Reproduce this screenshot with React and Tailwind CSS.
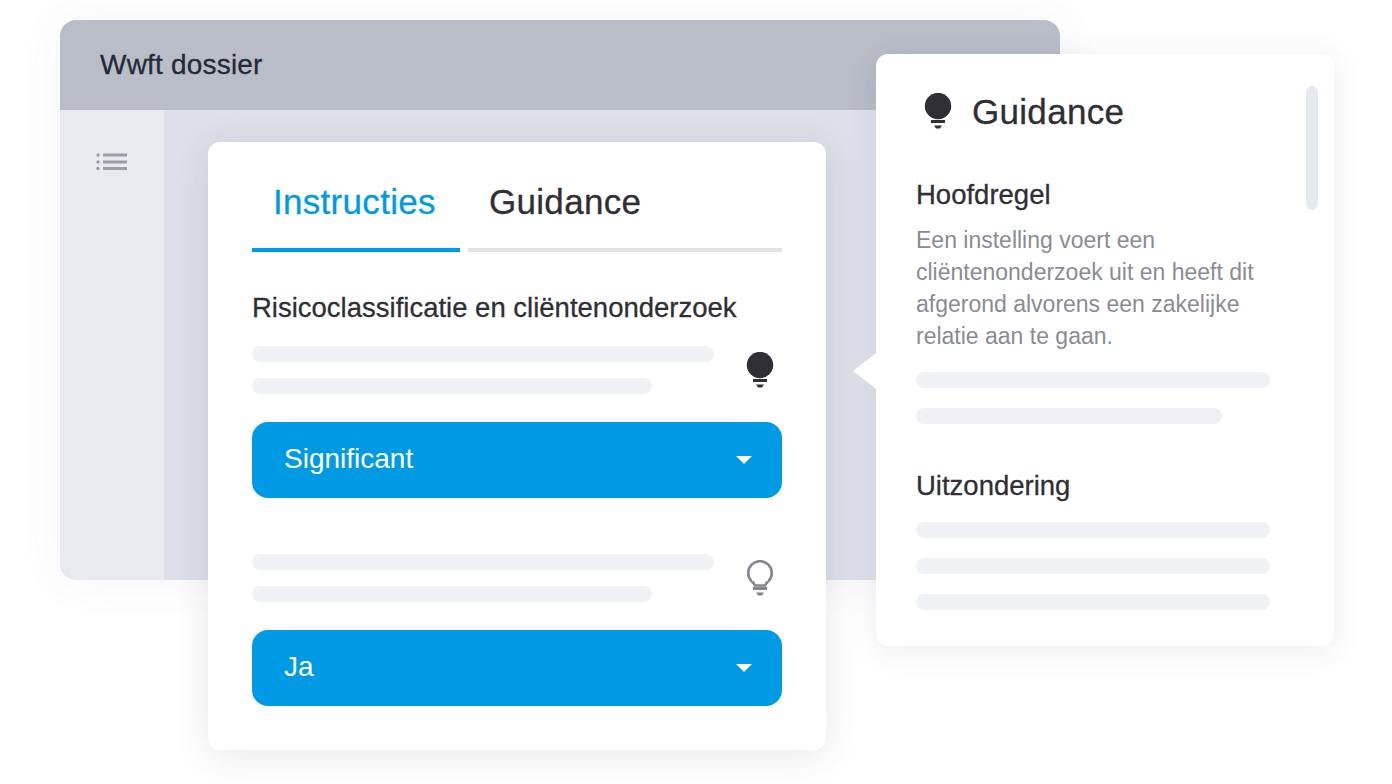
const font = { fontFamily: "'Liberation Sans', Arial, sans-serif" };

// Filled or outlined bulb with the two little base lines
const Bulb = ({ outline = false, className = "" }) => {
  const color = outline ? "#85858d" : "#2f2f35";
  return (
    <svg width="28" height="38" viewBox="0 0 28 38" className={className}>
      <circle
        cx="14"
        cy="13"
        r={outline ? 11.8 : 13.2}
        fill={outline ? "none" : color}
        stroke={outline ? color : "none"}
        strokeWidth="2.6"
      />
      <path d="M6 20h16l-2.500 5h-11z" fill={outline ? "#fff" : color} />
      {outline && <path d="M6.500 21.500 9 25.500h10l2.500-4" fill="none" stroke={color} strokeWidth="2.400" />}
      <rect x="7" y="27" width="14" height="3" fill={color} />
      <path d="M10 32.500h8l-2 3h-4z" fill={color} />
    </svg>
  );
};

const Bar = ({ className = "" }) => (
  <div className={`h-4 rounded-lg bg-[#f0f1f5] ${className}`} />
);

const Question = ({ value, outline }) => (
  <div>
    <div className="flex items-center justify-between">
      <div className="flex flex-col gap-4">
        <Bar className="w-[462px]" />
        <Bar className="w-[400px]" />
      </div>
      <Bulb outline={outline} className="mr-2 mt-[2px]" />
    </div>
    <div className="mt-[28px] flex h-[76px] items-center justify-between rounded-2xl bg-[#009ae4] pl-8 pr-[30px] text-[28px] text-white">
      <span className="-mt-[2px]">{value}</span>
      <span className="h-0 w-0 border-x-[8px] border-t-[8px] border-x-transparent border-t-white" />
    </div>
  </div>
);

const App = () => {
  return (
    <div className="relative h-[784px] w-[1392px] overflow-hidden bg-white" style={font}>
      {/* Dossier window */}
      <div className="absolute left-[60px] top-[20px] flex h-[560px] w-[1000px] flex-col overflow-hidden rounded-2xl shadow-[0_0_40px_rgba(120,90,150,0.08)]">
        <div className="flex h-[90px] items-center bg-[#b9bdc8] pl-10 text-[28px] tracking-[0.2px] text-[#262a38] [-webkit-text-stroke:0.3px_#262a38]">
          Wwft dossier
        </div>
        <div className="flex flex-1">
          <div className="flex w-[104px] justify-center bg-[#e9eaf0] pt-[42px]">
            <svg width="32" height="20" viewBox="0 0 32 20" fill="#9a9dab">
              <circle cx="2" cy="3" r="1.700" />
              <circle cx="2" cy="10" r="1.700" />
              <circle cx="2" cy="16.500" r="1.700" />
              <rect x="7" y="1.500" width="24" height="3" />
              <rect x="7" y="8.500" width="24" height="3" />
              <rect x="7" y="15" width="24" height="3" />
            </svg>
          </div>
          <div className="flex-1 bg-[#dde0e9]" />
        </div>
      </div>

      {/* Instructions card */}
      <div className="absolute left-[208px] top-[142px] h-[608px] w-[618px] rounded-xl bg-white px-11 pt-[34px] shadow-[0_4px_36px_rgba(60,60,60,0.12)]">
        <div className="flex gap-2 text-[35px] tracking-[0.3px]">
          <div className="h-[76px] w-[208px] border-b-4 border-[#009ae4] pl-[21px] text-[#009ae4] [-webkit-text-stroke:0.3px_#009ae4]">
            Instructies
          </div>
          <div className="h-[76px] flex-1 border-b-4 border-[#e2e3e9] pl-[21px] text-[#2f2f35] [-webkit-text-stroke:0.3px_#2f2f35]">
            Guidance
          </div>
        </div>
        <h2 className="mt-[38px] text-[27.500px] leading-9 text-[#2f2f35] [-webkit-text-stroke:0.3px_#2f2f35]">
          Risicoclassificatie en cliëntenonderzoek
        </h2>
        <div className="mt-[20px] flex flex-col gap-[56px]">
          <Question value="Significant" />
          <Question value="Ja" outline />
        </div>
      </div>

      {/* Guidance popover */}
      <div className="absolute left-[876px] top-[54px] h-[592px] w-[458px] rounded-xl bg-white pl-10 pr-[64px] shadow-[0_4px_30px_rgba(70,60,100,0.1)]">
        <span className="absolute -left-[23px] top-[299px] h-0 w-0 border-y-[18px] border-r-[23px] border-y-transparent border-r-white" />
        <span className="absolute right-4 top-8 h-[124px] w-3 rounded-md bg-[#e7e9f0]" />
        <div className="flex items-center gap-[20px] pl-2 pt-[36px] text-[35px] leading-[44px] tracking-[0.3px] text-[#2f2f35] [-webkit-text-stroke:0.3px_#2f2f35]">
          <Bulb />
          Guidance
        </div>
        <h3 className="mt-[43px] text-[27.500px] leading-9 text-[#2f2f35] [-webkit-text-stroke:0.3px_#2f2f35]">Hoofdregel</h3>
        <p className="mt-[11px] text-[23px] leading-8 text-[#8b8b95]">
          Een instelling voert een cliëntenonderzoek uit en heeft dit afgerond alvorens een zakelijke relatie aan te gaan.
        </p>
        <div className="mt-[20px] flex flex-col gap-5">
          <Bar className="w-full" />
          <Bar className="w-[306px]" />
        </div>
        <h3 className="mt-[44px] text-[27.500px] leading-9 text-[#2f2f35] [-webkit-text-stroke:0.3px_#2f2f35]">Uitzondering</h3>
        <div className="mt-[18px] flex flex-col gap-5">
          <Bar className="w-full" />
          <Bar className="w-full" />
          <Bar className="w-full" />
        </div>
      </div>
    </div>
  );
};

export default App;
